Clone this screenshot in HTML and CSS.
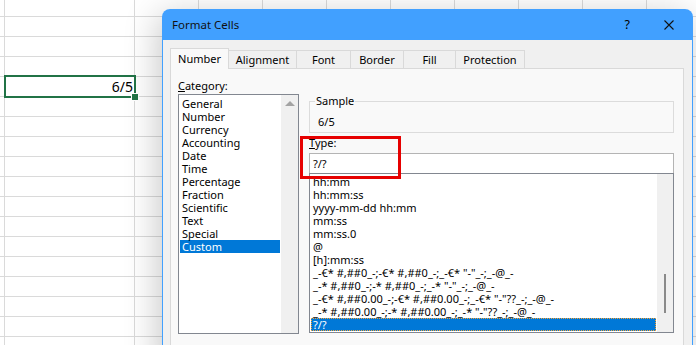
FILE: index.html
```html
<!DOCTYPE html>
<html lang="en">
<head>
    <meta charset="UTF-8">
    <title>Format Cells</title>
    <link rel="stylesheet" href="styles.css">
</head>
<body>
    <div class="sheet">
        <div class="col col-edge"></div>
        <div class="col col-b"></div>
        <div class="col-rest"></div>
        <div class="cell-selected">6/5<i class="fill-handle"></i></div>
    </div>

    <div class="dialog">
        <div class="titlebar">
            <span class="title">Format Cells</span>
            <span class="help">?</span>
            <svg class="close" width="10" height="10" viewBox="0 0 10 10">
                <path d="M0.5 0.5 L9.5 9.5 M9.5 0.5 L0.5 9.5" stroke="#111" stroke-width="1.1" fill="none"/>
            </svg>
        </div>

        <div class="dialog-body">
            <div class="tabs">
                <div class="tab active" style="width:59px">Number</div>
                <div class="tab" style="width:69px">Alignment</div>
                <div class="tab" style="width:55px">Font</div>
                <div class="tab" style="width:54px">Border</div>
                <div class="tab" style="width:53px">Fill</div>
                <div class="tab" style="width:70px">Protection</div>
            </div>

            <div class="panel">
                <div class="category">
                    <div class="field-label"><u>C</u>ategory:</div>
                    <div class="listbox cat-list">
                        <ul class="items">
                            <li>General</li>
                            <li>Number</li>
                            <li>Currency</li>
                            <li>Accounting</li>
                            <li>Date</li>
                            <li>Time</li>
                            <li>Percentage</li>
                            <li>Fraction</li>
                            <li>Scientific</li>
                            <li>Text</li>
                            <li>Special</li>
                            <li class="selected">Custom</li>
                        </ul>
                        <div class="vscroll"><span class="arrow-up"></span></div>
                    </div>
                </div>

                <div class="details">
                    <fieldset class="sample">
                        <legend>Sample</legend>
                        <div class="sample-value">6/5</div>
                    </fieldset>
                    <div class="field-label type-label"><u>T</u>ype:</div>
                    <div class="type-input">?/?</div>
                    <div class="listbox fmt-list">
                        <ul class="items">
                            <li>hh:mm</li>
                            <li>hh:mm:ss</li>
                            <li>yyyy-mm-dd hh:mm</li>
                            <li>mm:ss</li>
                            <li>mm:ss.0</li>
                            <li>@</li>
                            <li>[h]:mm:ss</li>
                            <li>_-€* #,##0_-;-€* #,##0_-;_-€* "-"_-;_-@_-</li>
                            <li>_-* #,##0_-;-* #,##0_-;_-* "-"_-;_-@_-</li>
                            <li>_-€* #,##0.00_-;-€* #,##0.00_-;_-€* "-"??_-;_-@_-</li>
                            <li>_-* #,##0.00_-;-* #,##0.00_-;_-* "-"??_-;_-@_-</li>
                            <li class="selected focused">?/?</li>
                        </ul>
                        <div class="vscroll"><span class="thumb"></span></div>
                    </div>
                    <div class="highlight-box"></div>
                </div>
            </div>
        </div>
    </div>
</body>
</html>
```

FILE: styles.css
```css
html, body {
    margin: 0;
    width: 696px;
    height: 345px;
    overflow: hidden;
}

body {
    position: relative;
    font-family: "Noto Sans", "DejaVu Sans", sans-serif;
    font-size: 11px;
    color: #000;
    background: #fff;
}

/* spreadsheet behind the dialog */
.sheet {
    position: relative;
    display: flex;
    height: 345px;
    background-image: linear-gradient(#dadada 1px, transparent 1px);
    background-size: 100% 20px;
    background-position: 0 16px;
}

.col {
    border-right: 1px solid #dadada;
}

.col-edge {
    width: 4px;
}

.col-b {
    width: 129px;
}

.col-rest {
    flex: 1;
    background-image: linear-gradient(90deg, transparent 63px, #dadada 63px);
    background-size: 64px 100%;
}

.cell-selected {
    position: absolute;
    left: 4px;
    top: 75px;
    width: 127px;
    height: 19px;
    border: 2px solid #217346;
    font-size: 14px;
    line-height: 20px;
    text-align: right;
    padding-right: 1px;
}

.fill-handle {
    position: absolute;
    right: -5px;
    bottom: -5px;
    width: 6px;
    height: 6px;
    background: #217346;
    border: 1px solid #fff;
}

/* dialog */
.dialog {
    position: absolute;
    left: 162px;
    top: 9px;
    width: 531px;
    height: 360px;
    border-radius: 8px 8px 0 0;
    box-shadow: -4px 6px 34px rgba(0, 0, 0, 0.22);
    display: flex;
    flex-direction: column;
}

.titlebar {
    flex: none;
    height: 31px;
    background: #41a0ff;
    border-radius: 8px 8px 0 0;
    display: flex;
    align-items: center;
    padding: 0 19px 0 10px;
}

.title {
    flex: 1;
    font-size: 11.5px;
    color: #111;
}

.help {
    font-size: 12.5px;
    margin-right: 34px;
}

.dialog-body {
    flex: 1;
    min-height: 0;
    overflow: hidden;
    background: #f0f0f0;
    border-left: 1px solid #41a0ff;
    border-right: 1px solid #41a0ff;
    padding: 8px 8px 0 7px;
}

.tabs {
    display: flex;
    align-items: flex-end;
    height: 20px;
}

.tab {
    box-sizing: border-box;
    height: 18px;
    border: 1px solid #d9d9d9;
    border-bottom: none;
    margin-right: -1px;
    text-align: center;
    line-height: 17px;
    background: #f0f0f0;
}

.tab.active {
    position: relative;
    z-index: 1;
    height: 21px;
    margin-bottom: -1px;
    background: #f9f9f9;
    line-height: 20px;
}

.panel {
    height: 300px;
    background: #f9f9f9;
    border: 1px solid #d9d9d9;
    display: flex;
    gap: 10px;
    padding: 9px 8px 0 7px;
}

.field-label {
    height: 16px;
    line-height: 16px;
}

.category {
    width: 121px;
    display: flex;
    flex-direction: column;
}

.listbox {
    box-sizing: border-box;
    display: flex;
    background: #fff;
    border: 1px solid #828790;
}

.items {
    flex: 1;
    min-width: 0;
    list-style: none;
    margin: 0;
    padding: 2px 1px 0;
    overflow: hidden;
}

.items li {
    height: 13px;
    line-height: 13px;
    padding-left: 2px;
    white-space: nowrap;
}

.items li.selected {
    background: #0078d7;
    color: #fff;
}

.cat-list {
    height: 240px;
}

.vscroll {
    flex: none;
    width: 17px;
    background: #f0f0f0;
    position: relative;
}

.arrow-up {
    position: absolute;
    left: 4px;
    top: 6px;
    border-left: 5px solid transparent;
    border-right: 5px solid transparent;
    border-bottom: 5px solid #a3a3a3;
}

.details {
    width: 365px;
    display: flex;
    flex-direction: column;
    position: relative;
}

.sample {
    margin: 15px 0 0;
    padding: 0 0 2px 5px;
    border: 1px solid #dcdcdc;
    min-width: 0;
}

.sample legend {
    padding: 0 1px;
    line-height: 16px;
}

.sample-value {
    margin: 5px 0 0 3px;
    line-height: 16px;
}

.type-label {
    margin-top: 2px;
}

.type-input {
    box-sizing: border-box;
    height: 20px;
    margin-top: 2px;
    background: #fff;
    border: 1px solid #b4b4b4;
    border-bottom: none;
    padding-left: 3px;
    line-height: 19px;
}

.fmt-list {
    height: 160px;
}

.fmt-list .items {
    padding-top: 1px;
}

.fmt-list .vscroll {
    width: 16px;
}

.items li.focused {
    outline: 1px dotted #f7a234;
    outline-offset: -1px;
}

.thumb {
    position: absolute;
    left: 7px;
    top: 100px;
    width: 2px;
    height: 39px;
    background: #8a8a8a;
}

.highlight-box {
    position: absolute;
    left: -9px;
    top: 58px;
    width: 95px;
    height: 37px;
    border: 3px solid #e60000;
}
```
